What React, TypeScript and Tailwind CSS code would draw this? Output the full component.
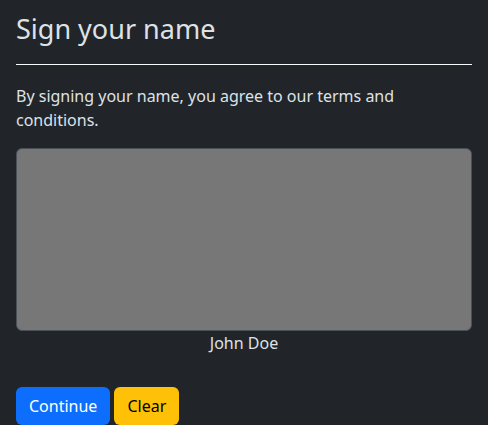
export default function App() {
  return (
    <div className="min-h-screen bg-[#212529] px-4 pt-[13px] text-[#dee2e6] font-['Noto_Sans',sans-serif]">
      <h2 className="text-[27px] leading-[32px] font-normal">Sign your name</h2>
      <hr className="mt-[19px] mb-[19px] border-0 h-px bg-[#f8f9fa]" />
      <p className="text-base leading-6 mb-4">
        By signing your name, you agree to our terms and conditions.
      </p>
      <div className="h-[183px] rounded-md border border-[#495057] bg-[#777777]" />
      <div className="text-center text-base leading-6">John Doe</div>
      <div className="mt-[32px] flex gap-1">
        <button className="h-[38px] rounded-md bg-[#0d6efd] px-[13px] text-base leading-6 text-white">Continue</button>
        <button className="h-[38px] rounded-md bg-[#ffc107] px-[13px] text-base leading-6 text-black">Clear</button>
      </div>
    </div>
  );
}
